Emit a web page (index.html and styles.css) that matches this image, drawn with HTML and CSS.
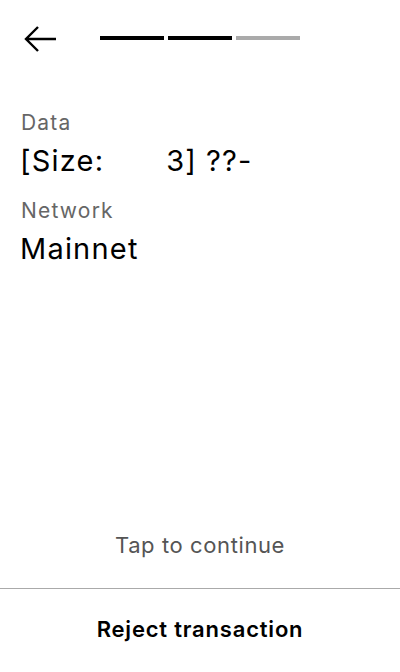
FILE: index.html
```html
<!DOCTYPE html>
<html>
<head>
<meta charset="utf-8">
<link rel="stylesheet" href="styles.css">
</head>
<body>
<div class="screen">
  <header class="top">
    <svg class="back" width="34" height="28" viewBox="0 0 34 28">
      <path d="M33 14H3M15 2L3 14L15 26" fill="none" stroke="#000" stroke-width="2.4"/>
    </svg>
    <div class="steps">
      <span class="step on"></span>
      <span class="step on"></span>
      <span class="step"></span>
    </div>
  </header>
  <main class="content">
    <div class="label">Data</div>
    <div class="value pre">[Size:       3] ??-</div>
    <div class="label">Network</div>
    <div class="value">Mainnet</div>
  </main>
  <div class="tap">Tap to continue</div>
  <footer class="foot">Reject transaction</footer>
</div>
</body>
</html>
```
FILE: styles.css
```css
* { box-sizing: border-box; }
html, body { margin: 0; padding: 0; background: #fff; }
body { font-family: Inter, "Noto Sans", sans-serif; color: #000; }
.screen { width: 400px; height: 672px; display: flex; flex-direction: column; }
.top { display: flex; align-items: center; padding: 24px 0 0 23px; height: 52px; }
.back { display: block; margin-top: 2px; }
.steps { display: flex; gap: 4px; margin-left: 43px; }
.step { display: block; width: 64px; height: 4px; background: #aaa; }
.step.on { background: #000; }
.content { padding: 56px 20px 0 20px; flex: 1; }
.label { font-size: 21px; letter-spacing: 1.2px; color: #666; line-height: 30px; margin-left: 1px; }
.value { font-size: 29px; letter-spacing: 1.2px; line-height: 40px; margin-top: 3px; margin-bottom: 15px; }
.pre { white-space: pre; word-spacing: -0.5px; }
.tap { text-align: center; font-size: 22px; letter-spacing: 0.6px; color: #555; padding-bottom: 30px; }
.foot { border-top: 1px solid #aaa; height: 84px; padding-bottom: 4px; display: flex; align-items: center; justify-content: center; font-size: 22px; letter-spacing: 0.8px; font-weight: 600; }
```
